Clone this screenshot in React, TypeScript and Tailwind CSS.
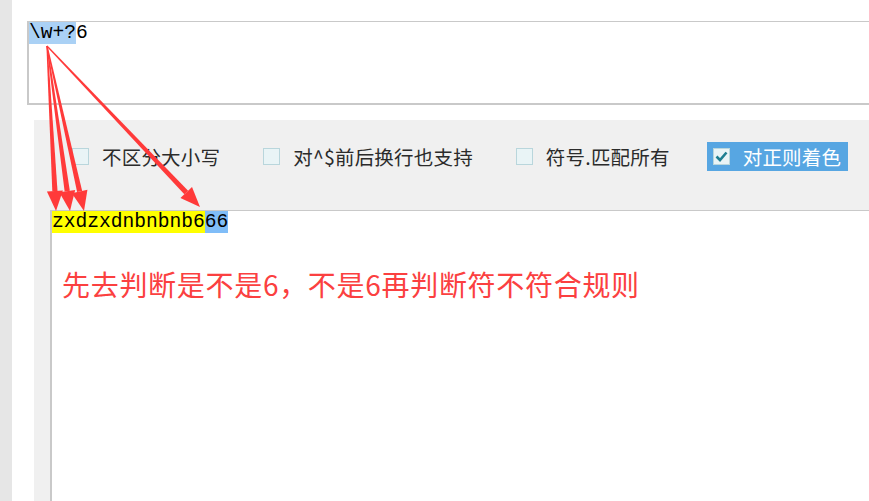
import React from "react";

const options = [
  { label: "不区分大小写", gap: "mr-[43px]" },
  { label: "对^$前后换行也支持", gap: "mr-[43px]" },
  { label: "符号.匹配所有", gap: "mr-[37px]" },
];

const arrowTips = [
  [56, 211],
  [70, 211],
  [84, 211],
  [200, 207],
];

const origin = [47, 46];

function Arrow({ tip }: { tip: number[] }) {
  const [ox, oy] = origin;
  const [tx, ty] = tip;
  const dx = tx - ox;
  const dy = ty - oy;
  const len = Math.hypot(dx, dy);
  const ux = dx / len;
  const uy = dy / len;
  const px = -uy;
  const py = ux;
  const headLen = 20;
  const bx = tx - ux * headLen;
  const by = ty - uy * headLen;
  const shaft = [
    [ox + px * 0.6, oy + py * 0.6],
    [bx + px * 2.6, by + py * 2.6],
    [bx - px * 2.6, by - py * 2.6],
    [ox - px * 0.6, oy - py * 0.6],
  ];
  const head = [
    [bx + px * 8, by + py * 8],
    [tx, ty],
    [bx - px * 8, by - py * 8],
  ];
  const pts = (a: number[][]) => a.map((p) => p.join(",")).join(" ");
  return (
    <g fill="#ff3a3a">
      <polygon points={pts(shaft)} />
      <polygon points={pts(head)} />
    </g>
  );
}

function Checkbox({ checked }: { checked?: boolean }) {
  return (
    <span className="w-[17px] h-[17px] shrink-0 border border-[#b9d6dc] bg-[#e9f4f6] flex items-center justify-center">
      {checked && (
        <svg width="13" height="11" viewBox="0 0 13 11">
          <path d="M1.5 5.5 L5 9 L11.5 1.5" fill="none" stroke="#1f7f91" strokeWidth="2.6" />
        </svg>
      )}
    </span>
  );
}

export default function App() {
  const mono = { fontFamily: '"Liberation Mono", "DejaVu Sans Mono", monospace' };
  return (
    <div className="w-[869px] h-[501px] bg-white relative flex overflow-hidden">
      {/* left strip */}
      <div className="w-[12px] bg-[#e6e6e6] shrink-0" />

      <div className="flex-1 flex flex-col min-w-0">
        {/* pattern input */}
        <div className="pt-[21px] pl-[15px]">
          <div className="h-[84px] border-t border-l-2 border-b-2 border-[#c9c9c9] bg-white pt-px">
            <div className="text-[19.6px] leading-[21px] text-black" style={mono}>
              <span className="bg-[#aad1f5]">\w+?</span>6
            </div>
          </div>
        </div>

        {/* options + editor */}
        <div className="mt-[15px] ml-[22px] flex-1 bg-[#f0f0f0] flex flex-col">
          <div
            className="h-[90px] flex items-start pt-[22px] pl-[38px] text-[19.5px] tracking-[0.2px] text-[#2b2b2b]"
            style={{ fontFamily: '"Noto Sans CJK SC", "Noto Sans", sans-serif' }}
          >
            {options.map((o) => (
              <div key={o.label} className={`flex items-center h-[29px] ${o.gap}`}>
                <Checkbox />
                <span className="ml-[13px] leading-none">{o.label}</span>
              </div>
            ))}
            <div className="flex items-center h-[29px] w-[141px] bg-[#57a6e2] pl-[6px] text-white">
              <Checkbox checked />
              <span className="ml-[13px] leading-none">对正则着色</span>
            </div>
          </div>

          <div className="flex-1 ml-[16px] border-l-2 border-t border-[#c9c9c9] bg-white">
            <div className="text-[19.6px] leading-[22px] text-black" style={mono}>
              <span className="bg-[#ffff00]">zxdzxdnbnbnb6</span>
              <span className="bg-[#80bdf8]">66</span>
            </div>
            <div
              className="mt-[35px] pl-[10px] text-[28px] leading-[32px] text-[#fb4040] tracking-[0.7px]"
              style={{ fontFamily: '"Noto Sans CJK SC", sans-serif' }}
            >
              先去判断是不是6，不是6再判断符不符合规则
            </div>
          </div>
        </div>
      </div>

      {/* annotation arrows */}
      <svg className="absolute inset-0 pointer-events-none" width="869" height="501">
        {arrowTips.map((t, i) => (
          <Arrow key={i} tip={t} />
        ))}
      </svg>
    </div>
  );
}
